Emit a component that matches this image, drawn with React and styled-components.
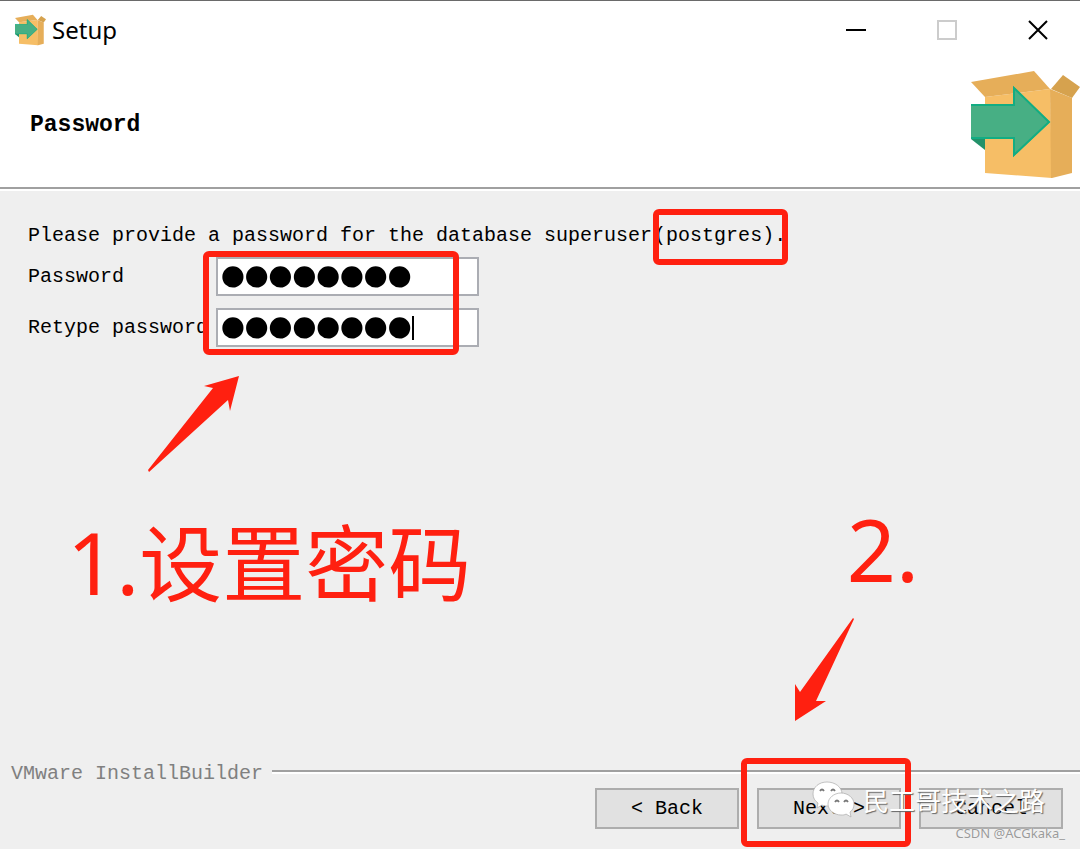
import React from 'react';
import styled, { createGlobalStyle } from 'styled-components';

const GlobalStyle = createGlobalStyle`
  * {
    box-sizing: border-box;
  }
  body {
    margin: 0;
    background-color: #efefef;
    color: #000;
    font-family: 'Liberation Mono', monospace;
    font-size: 20px;
    line-height: 28px;
  }
`;

const red = '#ff2010';

const Window = styled.div`
  display: flex;
  flex-direction: column;
  min-height: 100vh;
  border-top: 1px solid #6a6a6a;
  overflow: hidden;
`;

const TitleBar = styled.header`
  display: flex;
  align-items: center;
  height: 60px;
  padding: 0 32px 2px 15px;
  gap: 6px;
  background-color: #fff;
`;

const Title = styled.span`
  flex: 1;
  font-family: 'Noto Sans', sans-serif;
  font-size: 24px;
`;

const WindowButtons = styled.div`
  display: flex;
  gap: 71px;
`;

const WindowButton = styled.button`
  display: flex;
  padding: 0;
  border: 0;
  background: none;
  color: ${props => (props.disabled ? '#cccccc' : '#000')};
`;

const PageHeader = styled.div`
  display: flex;
  align-items: center;
  justify-content: space-between;
  padding: 10px 0 9px 30px;
  background-color: #fff;
  border-bottom: 2px solid #a0a0a0;
`;

const Heading = styled.h1`
  margin: 0;
  font-size: 23px;
  line-height: 28px;
`;

const Body = styled.main`
  position: relative;
  flex: 1;
  padding: 31px 28px 0;
  border-top: 2px solid #fff;
`;

const Message = styled.p`
  display: flex;
  gap: 2px;
  margin: 0 0 7px;
`;

const Marked = styled.span`
  position: relative;
`;

const Mark = styled.span`
  position: absolute;
  top: ${props => props.$top}px;
  left: ${props => props.$left}px;
  width: ${props => props.$width}px;
  height: ${props => props.$height}px;
  border: 6px solid ${red};
  border-radius: 6px;
  pointer-events: none;
`;

const Fields = styled.form`
  position: relative;
  display: grid;
  grid-template-columns: 188px 263px;
  align-items: center;
  row-gap: 12px;
`;

const Field = styled.div`
  position: relative;
  display: flex;
`;

const PasswordInput = styled.input`
  width: 100%;
  height: 39px;
  padding: 0 3px;
  border: 2px solid #abadb3;
  border-radius: 0;
  outline: none;
  background-color: #fff;
  color: #000;
  caret-color: transparent;
  font-family: 'Liberation Serif', serif;
  font-size: 68px;
  line-height: 35px;
  -webkit-text-stroke: 5px #000;
`;

const Caret = styled.span`
  position: absolute;
  top: 8px;
  left: 196px;
  width: 2px;
  height: 24px;
  background-color: #000;
`;

const Note = styled.div`
  position: absolute;
  color: ${red};
  font-family: 'Noto Sans', sans-serif;
  font-size: 86px;
  line-height: 100px;
  white-space: nowrap;
`;

const FirstNote = styled(Note)`
  top: 318px;
  left: 67px;
`;

const SecondNote = styled(Note)`
  right: 161px;
  bottom: 161px;
`;

const Chinese = styled.span`
  font-family: 'Noto Sans CJK SC', sans-serif;
  font-size: 83px;
`;

const FirstArrow = styled.svg`
  position: absolute;
  top: 184px;
  left: 147px;
`;

const SecondArrow = styled.svg`
  position: absolute;
  right: 225px;
  bottom: 38px;
`;

const Footer = styled.footer`
  position: relative;
  padding: 0 17px 20px 11px;
`;

const Brand = styled.div`
  display: flex;
  align-items: center;
  gap: 9px;
  margin-right: -17px;
  color: #808080;
`;

const Rule = styled.div`
  flex: 1;
  height: 4px;
  margin-bottom: 4px;
  border-top: 2px solid #a0a0a0;
  border-bottom: 2px solid #fff;
`;

const Actions = styled.div`
  display: flex;
  justify-content: flex-end;
  gap: 18px;
`;

const Action = styled.button`
  position: relative;
  width: 144px;
  height: 41px;
  padding: 0;
  border: 2px solid #adadad;
  background-color: #e1e1e1;
  color: #000;
  font-family: inherit;
  font-size: 20px;
`;

const Watermark = styled.div`
  position: absolute;
  right: 35px;
  bottom: 30px;
  display: flex;
  align-items: center;
  gap: 8px;
  color: #fff;
  font-family: 'Noto Sans CJK SC', sans-serif;
  font-size: 26px;
  line-height: 38px;
  text-shadow: 1px 1px 1px #666;
  pointer-events: none;
`;

const Credit = styled.div`
  position: absolute;
  right: 15px;
  bottom: 7px;
  color: #9a9a9a;
  font-family: 'Noto Sans', sans-serif;
  font-size: 13px;
  line-height: 18px;
  text-shadow: 0 0 1px #fff;
  pointer-events: none;
`;

const BoxIcon = ({ width, height }) => (
  <svg width={width} height={height} viewBox="0 0 109 107" aria-hidden="true">
    <path d="M14 26 79 18 81 107 14 102Z" fill="#f6be66" />
    <path d="M79 18 101 27V102L81 107H80Z" fill="#e6ae59" />
    <path d="M0 11 63 0 79 18 14 26Z" fill="#e6ae59" />
    <path d="M80 18 92 4 109 16 101 27Z" fill="#d6a24e" />
    <path d="M0 68H14V79Z" fill="#239169" />
    <path d="M0 33H42V15L79 51 42 86V68H0Z" fill="#47af84" />
    <path d="M0 34H43V17L78 51 43 84V67H0" fill="none" stroke="#12ad83" strokeWidth="2" />
  </svg>
);

const ChatIcon = () => (
  <svg width="43" height="38" viewBox="0 0 43 38" aria-hidden="true">
    <g fill="#fff" stroke="#aaa" strokeWidth="0.7">
      <path d="M15 1C7 1 1 6 1 13c0 4 2 7 5 9l-1 5 5-3c2 1 4 1 7 1 8 0 13-6 13-12C30 6 23 1 15 1Z" />
      <path d="M29 12c-7 0-13 5-13 11s6 11 13 11c2 0 4 0 5-1l5 3-1-5c3-2 4-5 4-8 0-6-6-11-13-11Z" />
    </g>
    <g fill="none" stroke="#777" strokeWidth="1.8">
      <path d="M8 10q2-3 4 0M19 10q2-3 4 0M23 21q2-3 4 0M32 21q2-3 4 0" />
    </g>
  </svg>
);

export default function App() {
  return (
    <>
      <GlobalStyle />
      <Window>
        <TitleBar>
          <BoxIcon width={31} height={32} />
          <Title>Setup</Title>
          <WindowButtons>
            <WindowButton type="button" aria-label="Minimize">
              <svg width="20" height="20" stroke="currentColor" strokeWidth="2">
                <path d="M0 10H20" />
              </svg>
            </WindowButton>
            <WindowButton type="button" aria-label="Maximize" disabled>
              <svg width="20" height="20" fill="none" stroke="currentColor" strokeWidth="2">
                <path d="M1 1H19V19H1Z" />
              </svg>
            </WindowButton>
            <WindowButton type="button" aria-label="Close">
              <svg width="20" height="20" stroke="currentColor" strokeWidth="2">
                <path d="M1 1 19 19M19 1 1 19" />
              </svg>
            </WindowButton>
          </WindowButtons>
        </TitleBar>

        <PageHeader>
          <Heading>Password</Heading>
          <BoxIcon width={109} height={107} />
        </PageHeader>

        <Body>
          <Message>
            <span>Please provide a password for the database superuser </span>
            <Marked>
              (postgres).
              <Mark $top={-13} $left={-1} $width={135} $height={56} />
            </Marked>
          </Message>
          <Fields>
            <label htmlFor="password">Password</label>
            <Field>
              <PasswordInput id="password" type="password" defaultValue="postgres" />
            </Field>
            <label htmlFor="retype">Retype password</label>
            <Field>
              <PasswordInput id="retype" type="password" defaultValue="postgres" />
              <Caret />
            </Field>
            <Mark $top={-6} $left={175} $width={256} $height={104} />
          </Fields>

          <FirstArrow width="94" height="98" fill={red} aria-hidden="true">
            <path d="M92 1 57 11 66 13 1 95 2 97 81 25 83 36Z" />
          </FirstArrow>
          <FirstNote>
            1.<Chinese>设置密码</Chinese>
          </FirstNote>
          <SecondNote>2.</SecondNote>
          <SecondArrow width="60" height="105" fill={red} aria-hidden="true">
            <path d="M0 104V67L5 75 58 1 59 2 21 84H31Z" />
          </SecondArrow>
        </Body>

        <Footer>
          <Brand>
            VMware InstallBuilder
            <Rule />
          </Brand>
          <Actions>
            <Action type="button">&lt; Back</Action>
            <Action type="button">
              Next &gt;
              <Mark $top={-32} $left={-18} $width={170} $height={89} />
            </Action>
            <Action type="button">Cancel</Action>
          </Actions>
          <Watermark>
            <ChatIcon />
            民工哥技术之路
          </Watermark>
          <Credit>CSDN @ACGkaka_</Credit>
        </Footer>
      </Window>
    </>
  );
}
